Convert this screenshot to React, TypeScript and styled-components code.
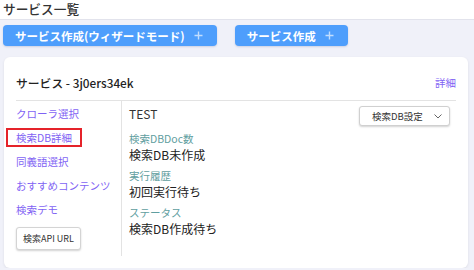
import styled, { createGlobalStyle } from 'styled-components'

const GlobalStyle = createGlobalStyle`
  body {
    margin: 0;
    background: #f0f1f9;
    font-family: 'Noto Sans CJK JP', 'Noto Sans', sans-serif;
    color: #222;
  }
`

const PlusIcon = () => (
  <svg width="9" height="9" viewBox="0 0 9 9">
    <path d="M4.5 0.5v8M0.5 4.5h8" stroke="rgba(255,255,255,0.65)" strokeWidth="1.4" />
  </svg>
)

const ChevronIcon = () => (
  <svg width="8" height="5" viewBox="0 0 8 5">
    <path d="M0.5 0.5L4 4L7.5 0.5" fill="none" stroke="#666" strokeWidth="1" />
  </svg>
)

const navItems = ['クローラ選択', '検索DB詳細', '同義語選択', 'おすすめコンテンツ', '検索デモ']

const fields = [
  { label: '検索DBDoc数', value: '検索DB未作成' },
  { label: '実行履歴', value: '初回実行待ち' },
  { label: 'ステータス', value: '検索DB作成待ち' },
]

export default function App() {
  return (
    <>
      <GlobalStyle />
      <Header>
        <PageTitle>サービス一覧</PageTitle>
      </Header>
      <Toolbar>
        <PrimaryButton>
          サービス作成(ウィザードモード)
          <PlusIcon />
        </PrimaryButton>
        <PrimaryButton>
          サービス作成
          <PlusIcon />
        </PrimaryButton>
      </Toolbar>
      <Card>
        <CardHeader>
          <CardTitle>サービス - 3j0ers34ek</CardTitle>
          <Link>詳細</Link>
        </CardHeader>
        <CardBody>
          <Nav>
            {navItems.map((item, i) => (
              <NavItem key={item}>
                <NavLabel $active={i === 1}>{item}</NavLabel>
              </NavItem>
            ))}
            <SmallButton>検索API URL</SmallButton>
          </Nav>
          <Content>
            <TopRow>
              <Name>TEST</Name>
              <Dropdown>
                検索DB設定
                <ChevronIcon />
              </Dropdown>
            </TopRow>
            {fields.map((f) => (
              <Field key={f.label}>
                <FieldLabel>{f.label}</FieldLabel>
                <FieldValue>{f.value}</FieldValue>
              </Field>
            ))}
          </Content>
        </CardBody>
      </Card>
    </>
  )
}

const Header = styled.div`
  height: 20px;
  background: #fff;
  border-bottom: 1px solid #e2e3ec;
  padding: 0 0 2px 3px;
  box-sizing: border-box;
  display: flex;
  align-items: center;
`

const PageTitle = styled.div`
  font-size: 12.7px;
  font-weight: 500;
  color: #333;
  line-height: 16px;
`

const Toolbar = styled.div`
  display: flex;
  gap: 18px;
  padding: 5px 0 0 3px;
`

const PrimaryButton = styled.button`
  display: flex;
  align-items: center;
  gap: 9px;
  height: 21px;
  padding: 0 14px 0 12px;
  border: none;
  border-radius: 4px;
  background: #4e9efc;
  color: #fff;
  font-family: inherit;
  font-size: 11.5px;
  font-weight: 700;
  box-shadow: 0 1px 2px rgba(60, 80, 140, 0.2);
`

const Card = styled.div`
  margin: 11px 6px 0 4px;
  background: #fff;
  border-radius: 6px;
  box-shadow: 0 1px 3px rgba(0, 0, 0, 0.08);
  padding-bottom: 12px;
`

const CardHeader = styled.div`
  display: flex;
  justify-content: space-between;
  align-items: center;
  margin: 0 12px;
  padding: 17px 0 8px;
  border-bottom: 1px solid #e3e3e3;
`

const CardTitle = styled.div`
  font-size: 11.8px;
  font-weight: 500;
  line-height: 18px;
  color: #222;
`

const Link = styled.a`
  font-size: 10.5px;
  color: #7f63f4;
  line-height: 18px;
`

const CardBody = styled.div`
  display: grid;
  grid-template-columns: 118px 1fr;
`

const Nav = styled.div`
  display: flex;
  flex-direction: column;
  align-items: flex-start;
  padding: 0 0 6px 12px;
  border-right: 1px solid #e3e3e3;
`

const NavItem = styled.div`
  height: 24px;
  display: flex;
  align-items: center;
`

const NavLabel = styled.span<{ $active?: boolean }>`
  display: inline-block;
  white-space: nowrap;
  font-size: 10.5px;
  line-height: 15px;
  color: #7f63f4;
  padding: 0 8px;
  margin-left: -10px;
  border: 2px solid ${(p) => (p.$active ? '#e5232a' : 'transparent')};
`

const SmallButton = styled.button`
  margin-top: 6px;
  height: 23px;
  padding: 0 6px;
  font-family: inherit;
  font-size: 9px;
  color: #333;
  background: #fff;
  border: 1px solid #d4d4d4;
  border-radius: 3px;
  box-shadow: 0 1px 2px rgba(0, 0, 0, 0.18);
`

const Content = styled.div`
  padding: 5px 18px 0 7px;
`

const TopRow = styled.div`
  display: flex;
  justify-content: space-between;
  align-items: flex-start;
`

const Name = styled.div`
  font-size: 12px;
  line-height: 16px;
  color: #333;
`

const Dropdown = styled.button`
  display: flex;
  align-items: center;
  gap: 11px;
  width: 91px;
  height: 20px;
  padding: 0 0 0 12px;
  font-family: inherit;
  font-size: 9.5px;
  color: #333;
  background: #fff;
  border: 1px solid #d0d0d0;
  border-radius: 3px;
  box-shadow: 0 1px 2px rgba(0, 0, 0, 0.18);
`

const Field = styled.div`
  margin-top: 5px;
`

const FieldLabel = styled.div`
  font-size: 10.5px;
  line-height: 15px;
  color: #5f9ea0;
`

const FieldValue = styled.div`
  font-size: 12px;
  line-height: 17px;
  color: #222;
`
